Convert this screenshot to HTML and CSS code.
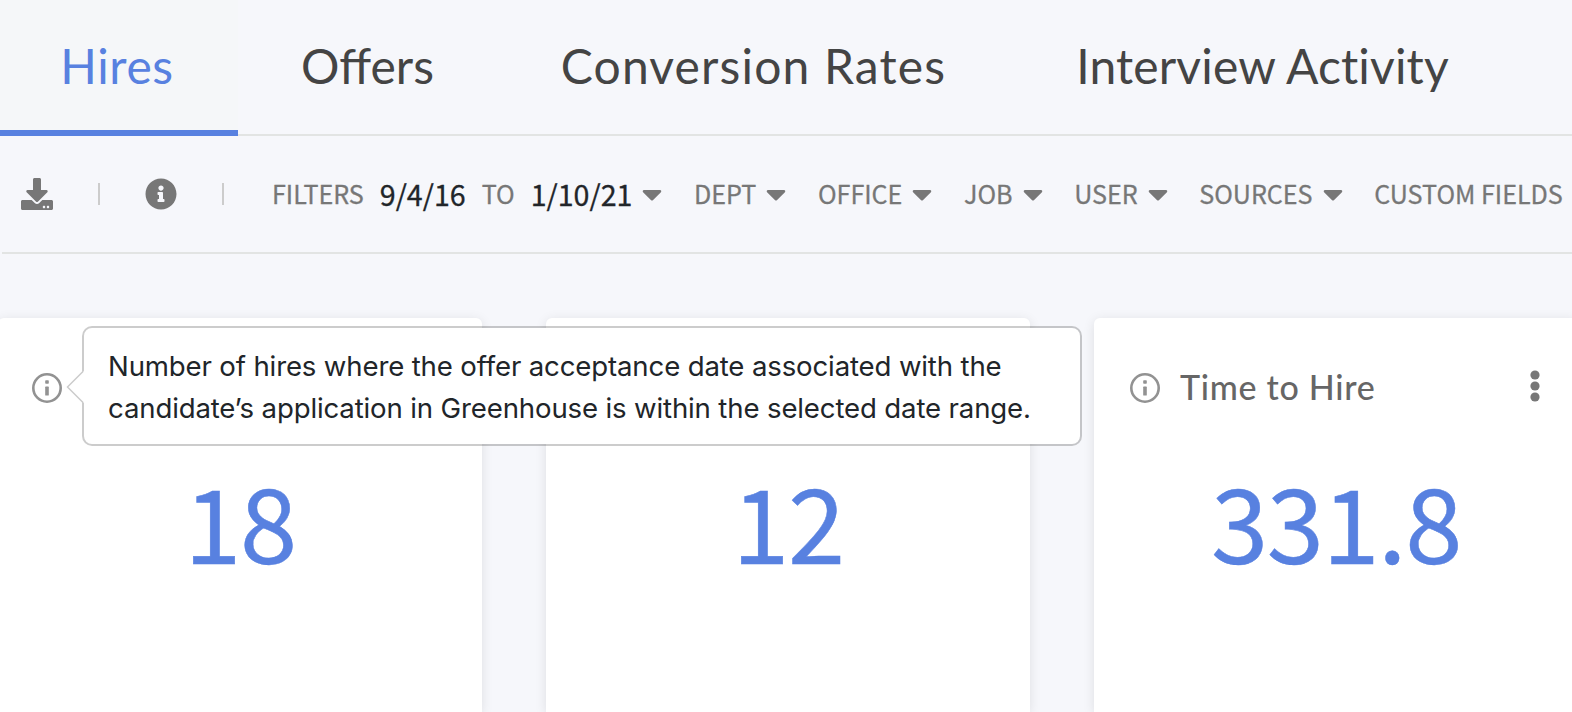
FILE: index.html
```html
<!DOCTYPE html>
<html lang="en">
<head>
    <meta charset="UTF-8">
    <meta name="viewport" content="width=device-width, initial-scale=1.0">
    <title>Hires</title>
    <link rel="stylesheet" href="styles.css">
</head>
<body>

    <!-- Shared icon shapes -->
    <svg class="icon-defs" aria-hidden="true">
        <symbol id="caret" viewBox="0 0 320 512">
            <path d="M31.3 192h257.3c17.8 0 26.7 21.5 14.1 34.1L174.1 354.8c-7.8 7.8-20.5 7.8-28.3 0L17.2 226.1C4.6 213.5 13.5 192 31.3 192z"/>
        </symbol>
        <symbol id="info" viewBox="0 0 30 30">
            <circle cx="15" cy="15" r="13.7" fill="none" stroke="currentColor" stroke-width="2.6"/>
            <rect x="13.2" y="7.2" width="3.6" height="3.6" rx="0.8"/>
            <rect x="13.2" y="13.6" width="3.6" height="9" rx="0.6"/>
        </symbol>
    </svg>

    <nav class="tabs">
        <a class="tab tab-hires active">Hires</a>
        <a class="tab tab-offers">Offers</a>
        <a class="tab tab-rates">Conversion Rates</a>
        <a class="tab tab-activity">Interview Activity</a>
    </nav>

    <div class="toolbar">
        <div class="tools">
            <svg class="tool-icon" viewBox="0 0 512 512"><path d="M216 0h80c13.3 0 24 10.7 24 24v168h87.7c17.8 0 26.7 21.5 14.1 34.1L269.7 378.3c-7.5 7.5-19.8 7.5-27.3 0L90.1 226.1c-12.6-12.6-3.7-34.1 14.1-34.1H192V24c0-13.3 10.7-24 24-24zm296 376v112c0 13.3-10.7 24-24 24H24c-13.3 0-24-10.7-24-24V376c0-13.3 10.7-24 24-24h146.7l49 49c20.1 20.1 52.5 20.1 72.6 0l49-49H488c13.3 0 24 10.7 24 24zm-124 88c0-11-9-20-20-20s-20 9-20 20 9 20 20 20 20-9 20-20zm64 0c0-11-9-20-20-20s-20 9-20 20 9 20 20 20 20-9 20-20z"/></svg>
            <span class="divider"></span>
            <svg class="tool-icon" viewBox="0 0 512 512"><path d="M256 8C119.043 8 8 119.083 8 256c0 136.997 111.043 248 248 248s248-111.003 248-248C504 119.083 392.957 8 256 8zm0 110c23.196 0 42 18.804 42 42s-18.804 42-42 42-42-18.804-42-42 18.804-42 42-42zm56 254c0 6.627-5.373 12-12 12h-88c-6.627 0-12-5.373-12-12v-24c0-6.627 5.373-12 12-12h12v-64h-12c-6.627 0-12-5.373-12-12v-24c0-6.627 5.373-12 12-12h64c6.627 0 12 5.373 12 12v100h12c6.627 0 12 5.373 12 12v24z"/></svg>
            <span class="divider"></span>
        </div>
        <div class="filters">
            <div class="date-range">
                <span>FILTERS</span>
                <span class="date">9/4/16</span>
                <span>TO</span>
                <span class="date">1/10/21</span>
                <svg class="caret"><use href="#caret"/></svg>
            </div>
            <div class="filter"><span>DEPT</span><svg class="caret"><use href="#caret"/></svg></div>
            <div class="filter"><span>OFFICE</span><svg class="caret"><use href="#caret"/></svg></div>
            <div class="filter"><span>JOB</span><svg class="caret"><use href="#caret"/></svg></div>
            <div class="filter"><span>USER</span><svg class="caret"><use href="#caret"/></svg></div>
            <div class="filter"><span>SOURCES</span><svg class="caret"><use href="#caret"/></svg></div>
            <div class="filter"><span>CUSTOM FIELDS</span></div>
        </div>
    </div>

    <main class="cards">
        <section class="card">
            <header class="card-header">
                <svg class="info"><use href="#info"/></svg>
                <div class="tooltip">Number of hires where the offer acceptance date associated with the <span class="line-two">candidate’s application in Greenhouse is within the selected date range.</span>
                    <svg class="tooltip-arrow" viewBox="0 0 18 36">
                        <path class="arrow-fill" d="M18 2L2 18l16 16z"/>
                        <path class="arrow-line" d="M17 2.5L1.5 18 17 33.5"/>
                    </svg>
                </div>
            </header>
            <div class="value">18</div>
        </section>
        <section class="card">
            <header class="card-header"></header>
            <div class="value">12</div>
        </section>
        <section class="card">
            <header class="card-header">
                <svg class="info"><use href="#info"/></svg>
                <h3 class="card-title">Time to Hire</h3>
                <svg class="menu" viewBox="0 0 10 32">
                    <circle cx="5" cy="5" r="4.6"/>
                    <circle cx="5" cy="16" r="4.6"/>
                    <circle cx="5" cy="27" r="4.6"/>
                </svg>
            </header>
            <div class="value">331.8</div>
        </section>
    </main>

</body>
</html>
```
FILE: styles.css
```css
* {
    box-sizing: border-box;
}

body {
    margin: 0;
    height: 712px;
    overflow: hidden;
    background-color: #f6f7fb;
    color: #212529;
    font-family: "Noto Sans CJK JP", "Open Sans", sans-serif;
}

svg {
    display: block;
    flex: none;
    fill: currentColor;
}

.icon-defs {
    display: none;
}

/* Tabs */
.tabs {
    display: flex;
    height: 136px;
    box-shadow: inset 0 -2px #e2e4e3;
    font-family: Lato, "Open Sans", sans-serif;
    font-size: 48px;
    color: #444;
}

.tab {
    height: 136px;
    line-height: 132px;
    text-align: center;
    white-space: nowrap;
}

.tab-hires {
    width: 238px;
    padding-right: 4px;
    letter-spacing: 0.6px;
}

.tab-offers {
    width: 259px;
}

.tab-rates {
    width: 513px;
    letter-spacing: 1.15px;
}

.tab-activity {
    width: 505px;
    letter-spacing: 0.15px;
}

.tab.active {
    background-color: #f5f7f9;
    border-bottom: 6px solid #5881e0;
    color: #5881e0;
}

/* Filter bar */
.toolbar {
    display: flex;
    align-items: center;
    height: 118px;
    margin-left: 2px;
    padding-left: 19.4px;
    border-bottom: 2px solid #e2e4e3;
    color: #777;
    font-size: 25.1px;
    line-height: 36px;
    white-space: nowrap;
}

.tools {
    display: flex;
    align-items: center;
    gap: 45px;
}

.tool-icon {
    width: 32px;
    height: 32px;
}

.divider {
    width: 2px;
    height: 22px;
    background-color: #ccc;
}

.filters {
    display: flex;
    align-items: center;
    gap: 31.6px;
    margin-left: 47.6px;
}

.filters span {
    padding-bottom: 2px;
    -webkit-text-stroke: 0.3px;
}

.date-range,
.filter {
    display: flex;
    align-items: center;
}

.date-range {
    gap: 16px;
}

.filters .date {
    padding-bottom: 0;
    color: #212529;
    font-size: 28.6px;
}

.caret {
    width: 20px;
    height: 32px;
    margin-left: 10px;
}

.date-range .caret {
    margin-left: -6px;
}

/* Cards */
.cards {
    display: flex;
    gap: 64px;
    width: 1580px;
    margin: 64px 0 0 -2px;
}

.card {
    width: 484px;
    height: 394px;
    flex: none;
    border-radius: 6px 6px 0 0;
    background-color: #fff;
    box-shadow: 0 2px 12px rgba(0, 0, 0, 0.1);
}

.card-header {
    position: relative;
    display: flex;
    align-items: center;
    height: 140px;
    padding: 0 38px 0 36px;
}

.info {
    width: 30px;
    height: 30px;
    color: #929292;
}

.card:first-child .card-header {
    padding-left: 34px;
}

.card-title {
    margin: -2px 0 0 20px;
    color: #666;
    font-family: Lato, "Open Sans", sans-serif;
    font-size: 34px;
    font-weight: 500;
    letter-spacing: 0.7px;
    line-height: 42px;
}

.menu {
    width: 10px;
    height: 32px;
    margin-left: auto;
    margin-top: -4px;
    color: #777;
}

.value {
    margin-top: 7px;
    color: #5881e0;
    font-size: 103px;
    letter-spacing: -1.5px;
    line-height: 110px;
    text-align: center;
    -webkit-text-stroke: 0.5px;
}

/* Tooltip sits over the neighbouring cards */
.tooltip {
    position: absolute;
    z-index: 1;
    top: 8px;
    left: 84px;
    width: 1000px;
    height: 120px;
    padding: 17px 0 0 24px;
    border: 2px solid rgba(0, 0, 0, 0.2);
    border-radius: 10px;
    background-color: #fff;
    background-clip: padding-box;
    font-family: Inter, "Liberation Sans", sans-serif;
    font-size: 27.6px;
    letter-spacing: -0.15px;
    line-height: 42px;
    white-space: nowrap;
}

.line-two {
    display: block;
}

.tooltip-arrow {
    position: absolute;
    top: 41px;
    left: -18px;
    width: 18px;
    height: 36px;
}

.arrow-fill {
    fill: #fff;
}

.arrow-line {
    fill: none;
    stroke: #ccc;
    stroke-width: 1.5;
}
```
